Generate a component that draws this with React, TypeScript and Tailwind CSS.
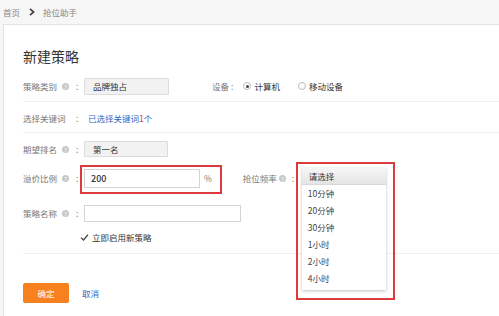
import React from 'react';

const font = { fontFamily: '"Noto Sans CJK SC", "Liberation Sans", sans-serif' };

function Help() {
  return (
    <span className="ml-[5px] flex h-[7px] w-[7px] items-center justify-center rounded-full bg-[#c8c8c8] text-[5px] leading-none text-white">
      ?
    </span>
  );
}

function Label({ text, help = true }: { text: string; help?: boolean }) {
  return (
    <div className="flex items-center">
      <div className="flex w-[53px] items-center text-[#777]">
        <span>{text}</span>
        {help && <Help />}
      </div>
      <span className="w-[8px] text-[#777]">:</span>
    </div>
  );
}

function Radio({ checked, label }: { checked?: boolean; label: string }) {
  return (
    <div className="flex items-center">
      <span className="flex h-[8px] w-[8px] items-center justify-center rounded-full border border-[#bbb] bg-white">
        {checked && <span className="h-[3px] w-[3px] rounded-full bg-[#444]" />}
      </span>
      <span className="ml-[3px] text-[#333]">{label}</span>
    </div>
  );
}

const options = ['10分钟', '20分钟', '30分钟', '1小时', '2小时', '4小时'];

export default function App() {
  return (
    <div className="h-[316px] w-[499px] overflow-hidden bg-[#f6f6f6] text-[8.5px] leading-none" style={font}>
      <div className="flex h-[24px] items-center pl-[3px] text-[#888]">
        <span>首页</span>
        <svg className="ml-[9px]" width="6" height="8" viewBox="0 0 6 8">
          <path d="M1 0.8 L4.6 4 L1 7.2" fill="none" stroke="#444" strokeWidth="1.7" />
        </svg>
        <span className="ml-[8px]">抢位助手</span>
      </div>

      <div className="ml-[3px] h-[292px] border-l border-t border-[#e2e2e2] bg-white pl-[19px] pt-[21px]">
        <div className="flex h-[20px] items-center text-[14px] text-[#333]">新建策略</div>

        <div className="mt-[11px] flex h-[18px] items-center">
          <Label text="策略类别" />
          <div className="flex h-[17px] w-[85px] items-center rounded-[1px] border border-[#dcdcdc] bg-[#f2f2f2] pl-[8px] text-[#333]">
            品牌独占
          </div>
          <span className="ml-[43px] text-[#777]">设备</span>
          <span className="ml-[2px] text-[#777]">:</span>
          <div className="ml-[10px]">
            <Radio checked label="计算机" />
          </div>
          <div className="ml-[18px]">
            <Radio label="移动设备" />
          </div>
        </div>

        <div className="mt-[6px] h-px bg-[#f0f0f0]" />

        <div className="mt-[8px] flex h-[16px] items-center">
          <Label text="选择关键词" help={false} />
          <span className="ml-[4px] text-[#2f66c4]">
            已选择关键词<span className="text-[#e2306c]">1</span>个
          </span>
        </div>

        <div className="mt-[6px] h-px bg-[#f0f0f0]" />

        <div className="mt-[8px] flex h-[16px] items-center">
          <Label text="期望排名" />
          <div className="flex h-[16px] w-[84px] items-center rounded-[1px] border border-[#dcdcdc] bg-[#f2f2f2] pl-[8px] text-[#333]">
            第一名
          </div>
        </div>

        <div className="mt-[12px] flex h-[19px] items-center">
          <Label text="溢价比例" />
          <div className="relative flex h-[19px] w-[116px] items-center border border-[#d4d4d4] bg-white pl-[6px] text-[9px] font-medium text-[#333]">
            200
            <div className="absolute -left-[5px] -top-[5px] h-[29px] w-[142px] border-2 border-[#dc3b3e]" />
          </div>
          <span className="ml-[4px] text-[#777]">%</span>
          <span className="ml-[31px] text-[#777]">抢位频率</span>
          <span className="ml-[2px] flex h-[7px] w-[7px] items-center justify-center rounded-full bg-[#c8c8c8] text-[5px] text-white">?</span>
          <span className="ml-[6px] w-[10px] text-[#777]">:</span>
          <div className="relative h-[19px] w-[84px]">
            <div className="absolute -top-[1px] left-0 z-10 w-[84px] bg-white pb-[3px] shadow-[0_1px_3px_rgba(0,0,0,0.25)]">
              <div className="flex h-[17px] items-center border-b border-[#d8d8d8] bg-gradient-to-b from-[#f6f6f6] to-[#e4e4e4] pl-[7px] text-[#333]">
                请选择
              </div>
              {options.map((o) => (
                <div key={o} className="flex h-[17px] items-center pl-[6px] text-[#444]">
                  {o}
                </div>
              ))}
            </div>
            <div className="absolute -left-[6px] -top-[7px] z-20 h-[138px] w-[99px] border-2 border-[#dc3b3e]" />
          </div>
        </div>

        <div className="mt-[17px] flex h-[17px] items-center">
          <Label text="策略名称" />
          <div className="h-[17px] w-[157px] border border-[#d4d4d4] bg-white" />
        </div>

        <div className="mt-[9px] flex h-[13px] items-center pl-[57px]">
          <svg width="9" height="9" viewBox="0 0 9 9">
            <path d="M1 4.6 L3.5 7 L8 1.6" fill="none" stroke="#444" strokeWidth="1.3" />
          </svg>
          <span className="ml-[3px] text-[#333]">立即启用新策略</span>
        </div>

        <div className="mt-[9px] h-px bg-[#f0f0f0]" />

        <div className="mt-[29px] flex h-[20px] items-center">
          <button className="flex h-[20px] w-[46px] items-center justify-center rounded-[2px] bg-[#f7811f] text-white">
            确定
          </button>
          <span className="ml-[13px] text-[#2f66c4]">取消</span>
        </div>
      </div>
    </div>
  );
}
